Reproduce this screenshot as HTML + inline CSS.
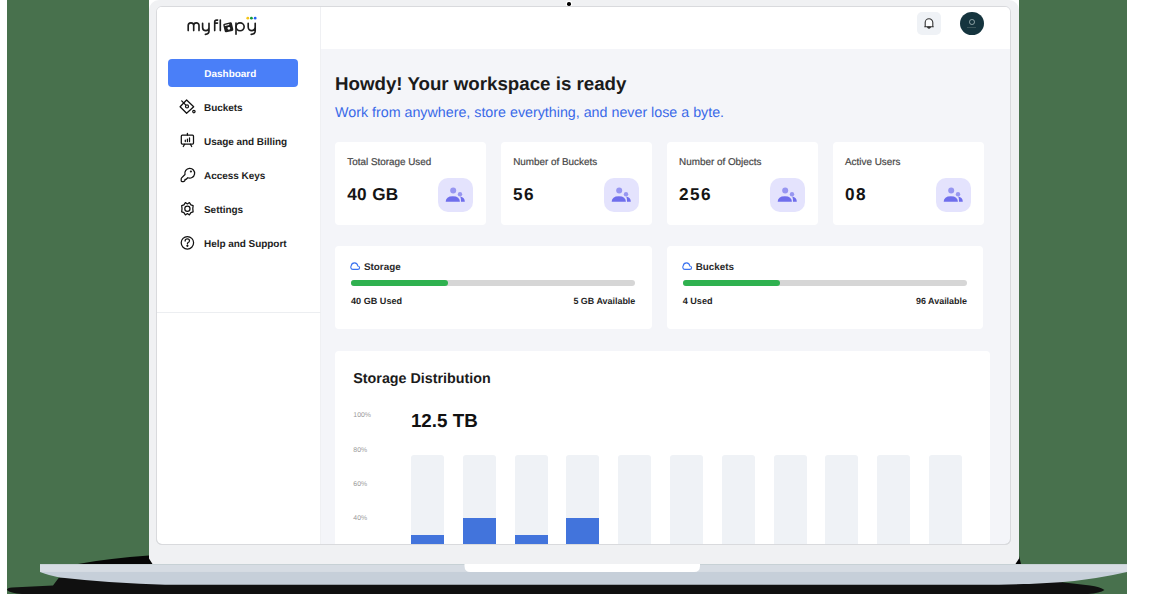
<!DOCTYPE html>
<html><head><meta charset="utf-8">
<style>
*{margin:0;padding:0;box-sizing:border-box}
html,body{width:1175px;height:594px;overflow:hidden;background:#fff;font-family:"Liberation Sans",sans-serif;text-rendering:geometricPrecision}
.a{position:absolute}
.t{position:absolute;white-space:nowrap;line-height:1}
.card{position:absolute;background:#fff;border-radius:4px}
</style></head><body>
<div class="a" style="left:7px;top:0;width:1120px;height:594px;background:#48714d"></div>
<svg class="a" style="left:0;top:0" width="1175" height="594" viewBox="0 0 1175 594">
<path d="M78 564 Q110 558 149 555.5 L149 564 Z" fill="#060606"/>
<path d="M1019 556 L1021 564 L1019 564 Z" fill="#060606"/>
<path d="M7 590 Q7 587.8 12 587.5 L53 585.5 L59 577.5 L160 577 L1060 582 L1090 585.5 Q1100 586.5 1104.5 590 Q1100 593 1088 594 L22 594 Q10 593 7 590 Z" fill="#101010"/>
</svg>
<div class="a" style="left:149px;top:0;width:11px;height:11px;background:#fff"></div>
<div class="a" style="left:1008px;top:0;width:11px;height:11px;background:#fff"></div>
<div class="a" style="left:149px;top:0;width:870px;height:564px;background:#f0f1f3;border-radius:10px 10px 0 0"></div>
<div class="a" style="left:567px;top:2.1px;width:3.6px;height:3.6px;border-radius:50%;background:#000;box-shadow:0 0 0 1.2px #fff"></div>
<div class="a" style="left:156.3px;top:6px;width:854.7px;height:539px;background:#f4f5f9;border:1px solid #d9dadd;border-radius:6px;overflow:hidden">
<div class="a" style="left:0;top:0;width:853px;height:42px;background:#fff"></div>
<div class="a" style="left:0;top:0;width:163.4px;height:537px;background:#fff;border-right:1px solid #eff0f3"></div>
<div class="a" style="left:0;top:304.6px;width:163.4px;height:1.2px;background:#eceef1"></div>
</div>
<svg class="a" style="left:0;top:0" width="1175" height="594" viewBox="0 0 1175 594">
<path d="M40 564.3 L1127 564.3 L1127 572 Q1095 579.5 1060 582.3 Q1020 584.7 980 584.7 L165 584.7 Q115 583.8 60 577.6 Q48 575 40 572 Z" fill="#c6cfd9"/>
<rect x="40" y="564.3" width="1087" height="7.6" fill="#d6dce3"/>
<path d="M464.5 564 L700 564 L700 566 Q700 572 694 572 L470.5 572 Q464.5 572 464.5 566 Z" fill="#fff"/>
</svg>
<svg class="a" style="left:0;top:0" width="300" height="50" viewBox="0 0 300 50">
<g fill="none" stroke="#1e1e1e" stroke-width="1.65" stroke-linecap="round" stroke-linejoin="round">
<path d="M188.2 30.6 V25.55 A2.75 2.75 0 0 1 193.7 25.55 V30.6 M193.7 25.55 A2.65 2.65 0 0 1 199 25.55 V30.6"/>
<path d="M202.6 23.3 V27.4 A3.2 3.2 0 0 0 209 27.4 V23.3 M209 27.4 V31 Q209 34.2 205.4 34.4"/>
<path d="M214.7 30.6 V22 Q214.7 20.1 216.6 20.1 H217.6 M214.7 23.1 H217.5"/>
<path d="M220.3 20.1 V30.6"/>
<path d="M236 23.1 V34.2"/>
<ellipse cx="240.1" cy="26.8" rx="4.05" ry="3.95"/>
<path d="M248.2 23.3 V27.1 A3.5 3.5 0 0 0 255.2 27.1 V23.3 M255.2 27.1 V31 Q255.2 34.2 251.2 34.4"/>
</g>
<g transform="rotate(-13 228.3 27.3)"><rect x="223.9" y="22.9" width="8.8" height="8.8" rx="1.3" fill="#1e1e1e"/><rect x="225.3" y="24.3" width="4.5" height="1.1" fill="#fff"/><circle cx="228.6" cy="28.4" r="1.4" fill="#fff"/></g>
<circle cx="247.8" cy="18.2" r="1.4" fill="#f4c51a"/>
<circle cx="251.4" cy="18.2" r="1.4" fill="#14993a"/>
<circle cx="255.2" cy="18.2" r="1.4" fill="#1f5ef6"/>
</svg>
<div class="a" style="left:168px;top:59px;width:130px;height:28px;background:#4a7ff8;border-radius:4px"></div>
<div class="t" style="left:230.30px;top:69.68px;font-size:9.95px;font-weight:700;color:#fff;transform:translateX(-50%);">Dashboard</div>
<div class="t" style="left:204.00px;top:103.83px;font-size:10px;font-weight:700;color:#1f1f1f;letter-spacing:-0.05px;">Buckets</div>
<div class="t" style="left:204.00px;top:137.84px;font-size:10px;font-weight:700;color:#1f1f1f;letter-spacing:-0.05px;">Usage and Billing</div>
<div class="t" style="left:204.00px;top:171.84px;font-size:10px;font-weight:700;color:#1f1f1f;letter-spacing:-0.05px;">Access Keys</div>
<div class="t" style="left:204.00px;top:205.84px;font-size:10px;font-weight:700;color:#1f1f1f;letter-spacing:-0.05px;">Settings</div>
<div class="t" style="left:204.00px;top:239.84px;font-size:10px;font-weight:700;color:#1f1f1f;letter-spacing:-0.05px;">Help and Support</div>
<svg class="a" style="left:175px;top:95px" width="25" height="160" viewBox="0 0 25 160" fill="none" stroke="#111" stroke-width="1.25" stroke-linecap="round" stroke-linejoin="round">
<path d="M11.6 5 L18.7 11.8 L11.6 18.3 L5.1 11.8 Z"/>
<path d="M6.7 5.9 L10.6 9.9"/><circle cx="12" cy="11.4" r="1.5"/>
<circle cx="18.9" cy="16.6" r="1.2"/>
<g transform="translate(0,34)">
<rect x="6.3" y="6.2" width="12.2" height="8.8" rx="1"/>
<path d="M12.4 4.4 V6" /><path d="M9.6 15.2 L8.3 17.5 M15.4 15.2 L16.7 17.5"/>
<path d="M10.3 11 V12.5 M12.4 10.1 V12.5 M14.5 8.9 V12.5"/>
</g>
<g transform="translate(0,68)">
<path d="M10 11.5 A4.9 4.9 0 1 1 12.8 14.7 L11.2 16.3 H10 V17.5 L9.2 18.3 Q8.9 18.6 8.4 18.6 H7 Q6.2 18.6 6.2 17.8 V15.9 Q6.2 15.3 6.6 14.9 Z"/><circle cx="15.9" cy="8.5" r="0.45" fill="#111"/>
</g>
<g transform="translate(0,102)">
<path d="M10.4 5.6 L12.4 6.9 L14.4 5.6 L15.9 7.9 L18.1 8.6 L17.8 11.8 L18.1 14.9 L15.9 15.6 L14.4 17.9 L12.4 16.6 L10.4 17.9 L8.9 15.6 L6.7 14.9 L7 11.8 L6.7 8.6 L8.9 7.9 Z"/>
<circle cx="12.4" cy="11.8" r="2.6"/>
</g>
<g transform="translate(0,136)">
<circle cx="12.4" cy="11.8" r="6.2"/>
<path d="M10.1 10 Q10.1 7.9 12.4 7.9 Q14.5 7.9 14.5 9.8 Q14.5 11.2 12.5 12 V12.9"/>
<circle cx="12.4" cy="14.8" r="0.5" fill="#111"/>
</g>
</svg>
<div class="a" style="left:917px;top:11.8px;width:23.8px;height:22.9px;background:#eff2f6;border-radius:5px"></div>
<svg class="a" style="left:917px;top:12px" width="24" height="23" viewBox="0 0 24 23" fill="none" stroke="#333" stroke-width="1.1" stroke-linecap="round" stroke-linejoin="round">
<path d="M8.2 14.3 V10.6 A3.8 3.8 0 0 1 15.8 10.6 V14.3 L16.3 14.8 H7.7 Z" fill="#fbfcfd"/><path d="M10.6 15.1 Q12 17.2 13.4 15.1 Z" fill="#333"/>
</svg>
<div class="a" style="left:960px;top:11.5px;width:24px;height:23.5px;border-radius:50%;background:#15343e"></div>
<div class="a" style="left:968.8px;top:19.1px;width:5.8px;height:5.8px;border-radius:50%;border:1px solid #8fa3a6"></div>
<div class="a" style="left:967px;top:27px;width:9px;height:1px;background:#3a5459"></div>
<div class="t" style="left:335.00px;top:74.75px;font-size:18.72px;font-weight:700;color:#1b1b1b;">Howdy! Your workspace is ready</div>
<div class="t" style="left:335.00px;top:106.12px;font-size:14.27px;font-weight:400;color:#3a6ae8;">Work from anywhere, store everything, and never lose a byte.</div>
<div class="card" style="left:335.0px;top:142px;width:151px;height:83px"></div>
<div class="t" style="left:347.30px;top:157.62px;font-size:9.9px;font-weight:400;color:#474747;-webkit-text-stroke:0.2px #474747;">Total Storage Used</div>
<div class="t" style="left:347.20px;top:186.44px;font-size:17.2px;font-weight:700;color:#141414;letter-spacing:0.35px;">40 GB</div>
<div class="a" style="left:438.3px;top:178px;width:34.5px;height:34px;background:#e4e3fd;border-radius:10px"></div>
<svg class="a" style="left:438.3px;top:178px" width="35" height="34" viewBox="0 0 35 34">
<circle cx="15.2" cy="12.5" r="3" fill="#9796f1"/><path d="M7.7 23.8 Q7.7 18.2 14.8 18.2 Q21.9 18.2 21.9 23.8 Z" fill="#6f6eec"/>
<circle cx="22" cy="16.2" r="2.2" fill="#9796f1"/><path d="M22.3 18.6 Q26.8 19.5 26.8 23.8 L23 23.8 Q23 20.5 22.3 18.6 Z" fill="#6f6eec"/>
</svg>
<div class="card" style="left:500.9px;top:142px;width:151px;height:83px"></div>
<div class="t" style="left:513.20px;top:157.62px;font-size:9.9px;font-weight:400;color:#474747;-webkit-text-stroke:0.2px #474747;">Number of Buckets</div>
<div class="t" style="left:513.10px;top:186.44px;font-size:17.2px;font-weight:700;color:#141414;letter-spacing:1.45px;">56</div>
<div class="a" style="left:604.2px;top:178px;width:34.5px;height:34px;background:#e4e3fd;border-radius:10px"></div>
<svg class="a" style="left:604.2px;top:178px" width="35" height="34" viewBox="0 0 35 34">
<circle cx="15.2" cy="12.5" r="3" fill="#9796f1"/><path d="M7.7 23.8 Q7.7 18.2 14.8 18.2 Q21.9 18.2 21.9 23.8 Z" fill="#6f6eec"/>
<circle cx="22" cy="16.2" r="2.2" fill="#9796f1"/><path d="M22.3 18.6 Q26.8 19.5 26.8 23.8 L23 23.8 Q23 20.5 22.3 18.6 Z" fill="#6f6eec"/>
</svg>
<div class="card" style="left:666.8px;top:142px;width:151px;height:83px"></div>
<div class="t" style="left:679.10px;top:157.62px;font-size:9.9px;font-weight:400;color:#474747;-webkit-text-stroke:0.2px #474747;">Number of Objects</div>
<div class="t" style="left:679.00px;top:186.44px;font-size:17.2px;font-weight:700;color:#141414;letter-spacing:1.45px;">256</div>
<div class="a" style="left:770.1px;top:178px;width:34.5px;height:34px;background:#e4e3fd;border-radius:10px"></div>
<svg class="a" style="left:770.1px;top:178px" width="35" height="34" viewBox="0 0 35 34">
<circle cx="15.2" cy="12.5" r="3" fill="#9796f1"/><path d="M7.7 23.8 Q7.7 18.2 14.8 18.2 Q21.9 18.2 21.9 23.8 Z" fill="#6f6eec"/>
<circle cx="22" cy="16.2" r="2.2" fill="#9796f1"/><path d="M22.3 18.6 Q26.8 19.5 26.8 23.8 L23 23.8 Q23 20.5 22.3 18.6 Z" fill="#6f6eec"/>
</svg>
<div class="card" style="left:832.7px;top:142px;width:151px;height:83px"></div>
<div class="t" style="left:845.00px;top:157.62px;font-size:9.9px;font-weight:400;color:#474747;-webkit-text-stroke:0.2px #474747;">Active Users</div>
<div class="t" style="left:844.90px;top:186.44px;font-size:17.2px;font-weight:700;color:#141414;letter-spacing:1.45px;">08</div>
<div class="a" style="left:936.0px;top:178px;width:34.5px;height:34px;background:#e4e3fd;border-radius:10px"></div>
<svg class="a" style="left:936.0px;top:178px" width="35" height="34" viewBox="0 0 35 34">
<circle cx="15.2" cy="12.5" r="3" fill="#9796f1"/><path d="M7.7 23.8 Q7.7 18.2 14.8 18.2 Q21.9 18.2 21.9 23.8 Z" fill="#6f6eec"/>
<circle cx="22" cy="16.2" r="2.2" fill="#9796f1"/><path d="M22.3 18.6 Q26.8 19.5 26.8 23.8 L23 23.8 Q23 20.5 22.3 18.6 Z" fill="#6f6eec"/>
</svg>
<div class="card" style="left:335.0px;top:246.2px;width:316.7px;height:83px"></div>
<svg class="a" style="left:350.0px;top:261px" width="11" height="10" viewBox="0 0 11 10" fill="none" stroke="#3b73f0" stroke-width="1.1">
<path d="M2.9 8.4 H7.7 Q9.6 8.4 9.6 6.7 Q9.6 5.1 7.8 5 Q7.3 1.9 4.6 1.9 Q1.6 1.9 1.2 4.9 Q0.7 5.6 0.8 6.6 Q1.1 8.4 2.9 8.4 Z"/></svg>
<div class="t" style="left:364.00px;top:262.96px;font-size:9.85px;font-weight:700;color:#2b2b2b;">Storage</div>
<div class="a" style="left:351.0px;top:280px;width:284.3px;height:6.3px;background:#d6d6d6;border-radius:4px"></div>
<div class="a" style="left:351.0px;top:280px;width:97px;height:6.3px;background:#2fb14f;border-radius:4px"></div>
<div class="t" style="left:351.00px;top:296.50px;font-size:9.1px;font-weight:700;color:#1f1f1f;">40 GB Used</div>
<div class="t" style="right:539.70px;top:296.62px;font-size:8.95px;font-weight:700;color:#1f1f1f;">5 GB Available</div>
<div class="card" style="left:666.7px;top:246.2px;width:316.7px;height:83px"></div>
<svg class="a" style="left:681.7px;top:261px" width="11" height="10" viewBox="0 0 11 10" fill="none" stroke="#3b73f0" stroke-width="1.1">
<path d="M2.9 8.4 H7.7 Q9.6 8.4 9.6 6.7 Q9.6 5.1 7.8 5 Q7.3 1.9 4.6 1.9 Q1.6 1.9 1.2 4.9 Q0.7 5.6 0.8 6.6 Q1.1 8.4 2.9 8.4 Z"/></svg>
<div class="t" style="left:695.70px;top:262.96px;font-size:9.85px;font-weight:700;color:#2b2b2b;">Buckets</div>
<div class="a" style="left:682.7px;top:280px;width:284.3px;height:6.3px;background:#d6d6d6;border-radius:4px"></div>
<div class="a" style="left:682.7px;top:280px;width:97px;height:6.3px;background:#2fb14f;border-radius:4px"></div>
<div class="t" style="left:682.70px;top:296.50px;font-size:9.1px;font-weight:700;color:#1f1f1f;">4 Used</div>
<div class="t" style="right:208.00px;top:296.62px;font-size:8.95px;font-weight:700;color:#1f1f1f;">96 Available</div>
<div class="card" style="left:335px;top:351px;width:655px;height:200px"></div>
<div class="t" style="left:353.30px;top:371.60px;font-size:14.3px;font-weight:700;color:#1b1b1b;">Storage Distribution</div>
<div class="t" style="left:353.30px;top:413.46px;font-size:6.9px;font-weight:400;color:#9a9a9a;">100%</div>
<div class="t" style="left:353.30px;top:447.66px;font-size:6.9px;font-weight:400;color:#9a9a9a;">80%</div>
<div class="t" style="left:353.30px;top:481.66px;font-size:6.9px;font-weight:400;color:#9a9a9a;">60%</div>
<div class="t" style="left:353.30px;top:515.66px;font-size:6.9px;font-weight:400;color:#9a9a9a;">40%</div>
<div class="t" style="left:410.90px;top:412.29px;font-size:18.8px;font-weight:700;color:#111;">12.5 TB</div>
<div class="a" style="left:410.9px;top:454.8px;width:33.2px;height:100px;background:#eff2f6;border-radius:3px 3px 0 0"></div>
<div class="a" style="left:410.9px;top:535.4px;width:33.2px;height:8.6px;background:#4274dc"></div>
<div class="a" style="left:462.7px;top:454.8px;width:33.2px;height:100px;background:#eff2f6;border-radius:3px 3px 0 0"></div>
<div class="a" style="left:462.7px;top:518.4px;width:33.2px;height:25.6px;background:#4274dc"></div>
<div class="a" style="left:514.5px;top:454.8px;width:33.2px;height:100px;background:#eff2f6;border-radius:3px 3px 0 0"></div>
<div class="a" style="left:514.5px;top:535.4px;width:33.2px;height:8.6px;background:#4274dc"></div>
<div class="a" style="left:566.3px;top:454.8px;width:33.2px;height:100px;background:#eff2f6;border-radius:3px 3px 0 0"></div>
<div class="a" style="left:566.3px;top:518.4px;width:33.2px;height:25.6px;background:#4274dc"></div>
<div class="a" style="left:618.1px;top:454.8px;width:33.2px;height:100px;background:#eff2f6;border-radius:3px 3px 0 0"></div>
<div class="a" style="left:669.9px;top:454.8px;width:33.2px;height:100px;background:#eff2f6;border-radius:3px 3px 0 0"></div>
<div class="a" style="left:721.7px;top:454.8px;width:33.2px;height:100px;background:#eff2f6;border-radius:3px 3px 0 0"></div>
<div class="a" style="left:773.5px;top:454.8px;width:33.2px;height:100px;background:#eff2f6;border-radius:3px 3px 0 0"></div>
<div class="a" style="left:825.3px;top:454.8px;width:33.2px;height:100px;background:#eff2f6;border-radius:3px 3px 0 0"></div>
<div class="a" style="left:877.1px;top:454.8px;width:33.2px;height:100px;background:#eff2f6;border-radius:3px 3px 0 0"></div>
<div class="a" style="left:928.9px;top:454.8px;width:33.2px;height:100px;background:#eff2f6;border-radius:3px 3px 0 0"></div>
<div class="a" style="left:149px;top:545px;width:870px;height:19px;background:#f0f1f3"></div>
<div class="a" style="left:156.3px;top:535px;width:854.7px;height:10px;border:1px solid #d9dadd;border-top:none;border-radius:0 0 6px 6px"></div>
<svg class="a" style="left:0;top:0" width="1175" height="594"><path d="M149 558.5 L152.5 564 L149 564 Z M1019 558.5 L1015.5 564 L1019 564 Z" fill="#050505"/></svg>
</body></html>
